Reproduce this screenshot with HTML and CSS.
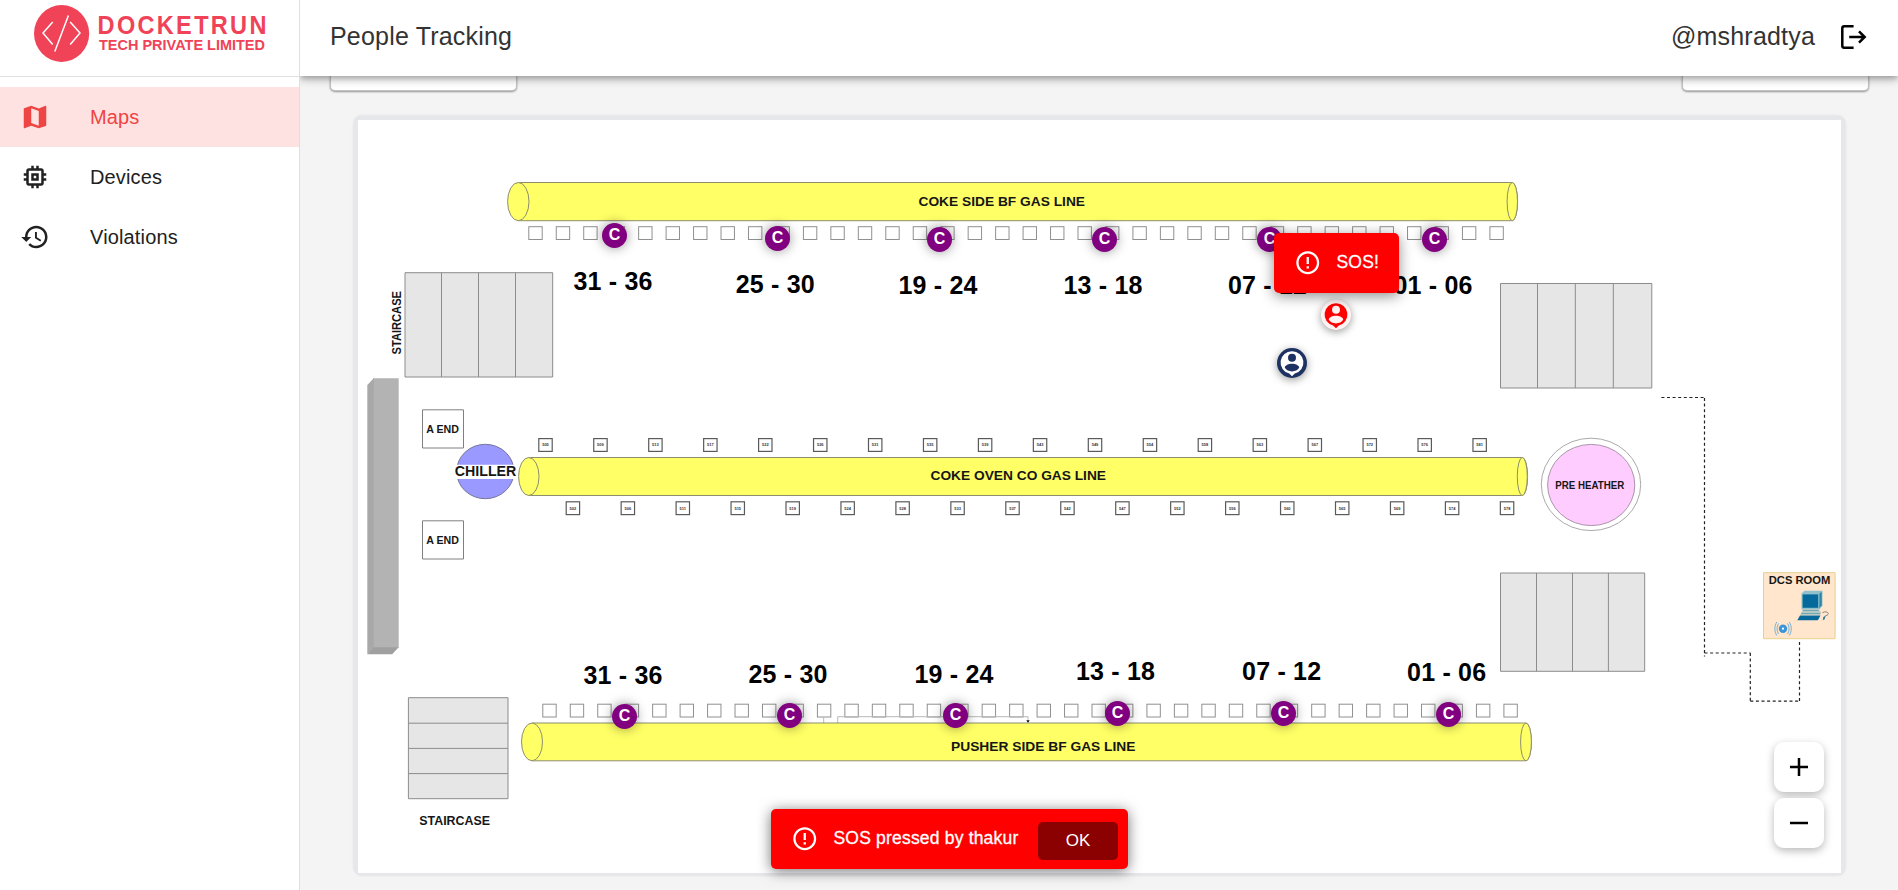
FILE: index.html
```html
<!DOCTYPE html>
<html lang="en">
<head>
<meta charset="utf-8">
<title>People Tracking</title>
<link rel="stylesheet" href="styles.css">
</head>
<body>
<div class="app">
  <aside class="sidebar">
    <div class="brand">
      <svg class="brand-logo" viewBox="0 0 299 76" role="img" aria-label="Docketrun Tech Private Limited">
        <ellipse class="brand-disc" cx="61.6" cy="33.5" rx="27.6" ry="28.4"/>
        <path class="brand-code" d="M52.7 21.9 43 33l9.7 11.6M70.2 21.9 80 33l-9.8 11.6M68.4 15.5 54.8 51.6"/>
        <text class="brand-name" transform="translate(97.6 33.5) scale(.92 1)" textLength="183.5">DOCKETRUN</text>
        <text class="brand-sub" x="99" y="50.3" textLength="166" lengthAdjust="spacingAndGlyphs">TECH PRIVATE LIMITED</text>
      </svg>
    </div>
    <nav class="nav">
      <a class="nav-item nav-item-active"><svg class="nav-icon" viewBox="0 0 24 24"><path d="M20.5 3l-.16.03L15 5.1 9 3 3.36 4.9c-.21.07-.36.25-.36.48V20.5c0 .28.22.5.5.5l.16-.03L9 18.9l6 2.1 5.64-1.9c.21-.07.36-.25.36-.48V3.5c0-.28-.22-.5-.5-.5zM15 19l-6-2.11V5l6 2.11V19z"/></svg>Maps</a>
      <a class="nav-item"><svg class="nav-icon" viewBox="0 0 24 24"><path d="M15 9H9v6h6V9zm-2 4h-2v-2h2v2zm8-2V9h-2V7c0-1.1-.9-2-2-2h-2V3h-2v2h-2V3H9v2H7c-1.1 0-2 .9-2 2v2H3v2h2v2H3v2h2v2c0 1.1.9 2 2 2h2v2h2v-2h2v2h2v-2h2c1.1 0 2-.9 2-2v-2h2v-2h-2v-2h2zm-4 6H7V7h10v10z"/></svg>Devices</a>
      <a class="nav-item"><svg class="nav-icon" viewBox="0 0 24 24"><path d="M13 3c-4.97 0-9 4.03-9 9H1l3.89 3.89.07.14L9 12H6c0-3.87 3.13-7 7-7s7 3.13 7 7-3.13 7-7 7c-1.93 0-3.68-.79-4.94-2.06l-1.42 1.42C8.27 19.99 10.51 21 13 21c4.97 0 9-4.03 9-9s-4.03-9-9-9zm-1 5v5l4.28 2.54.72-1.21-3.5-2.08V8H12z"/></svg>Violations</a>
    </nav>
  </aside>

  <div class="main">
    <header class="topbar">
      <h1 class="title">People Tracking</h1>
      <div class="account">
        <span>@mshradtya</span>
        <svg class="logout" viewBox="0 0 26 24"><path d="M12.6 1.3H3.3q-2 0-2 2v17.4q0 2 2 2h9.3M8.2 12h15.4M18 6.3l5.7 5.7-5.7 5.7"/></svg>
      </div>
    </header>
    <div class="content">
      <div class="controls"><div class="control"></div><div class="control control-right"></div></div>
      <section class="map">
        <svg class="plan" viewBox="358 120 1483 753">
          <g class="wall">
            <path fill="#b3b3b3" d="M373 378.3h25.7V648H373z"/>
            <path fill="#a8a8a8" d="M367.3 385l6.5-6.7V648l-6.5 6.3z"/>
            <path fill="#a0a0a0" d="M367.3 654.3l6.5-7h24.9l-6.5 7z"/>
          </g>
          <g class="stairs">
            <path d="M405 272.7h147.7V377H405zM441.5 272.7V377M478.5 272.7V377M515.5 272.7V377"/>
            <path d="M1500.5 283.5h151.3V388h-151.3zM1537.5 283.5V388M1575.3 283.5V388M1613.3 283.5V388"/>
            <path d="M1500.5 573h144.2v98.3h-144.2zM1536.5 573v98.3M1572.5 573v98.3M1608.4 573v98.3"/>
            <path d="M408.4 697.7H508V798.7H408.4zM408.4 723.2H508M408.4 748.4H508M408.4 773.6H508"/>
          </g>
          <g id="sockets"></g>
          <path class="trace" d="M823.7 717v6M837.7 723v-6.3H1028v3"/>
          <path d="M1026.4 720.2h3.2l-1.6 2.8z"/>
          <g class="pipe">
            <path d="M518.3 182.5H1512.3a5.3 19.1 0 0 1 0 38.2H518.3z"/>
            <ellipse cx="518.3" cy="201.6" rx="10.7" ry="19.1"/><ellipse cx="1512.3" cy="201.6" rx="5.2" ry="19.1"/>
            <path d="M528.7 457.5H1522.4a5.2 19 0 0 1 0 38H528.7z"/>
            <ellipse cx="528.8" cy="476.5" rx="10.2" ry="19"/><ellipse cx="1522.3" cy="476.5" rx="5" ry="19"/>
            <path d="M532 723H1526a5.4 18.9 0 0 1 0 37.8H532z"/>
            <ellipse cx="532" cy="741.9" rx="10.5" ry="18.9"/><ellipse cx="1526" cy="741.9" rx="5.4" ry="18.9"/>
          </g>
          <g class="room"><path d="M422.5 409.8h41V448h-41zM422.5 520.8h41V559h-41z"/></g>
          <ellipse class="chiller" cx="485.3" cy="471.5" rx="28.7" ry="27.2"/>
          <path fill="#fff" d="M455 464.7h61v14.3h-61z"/>
          <ellipse class="ring" cx="1591" cy="484.4" rx="49.7" ry="46.2"/>
          <ellipse class="heater" cx="1591.2" cy="485" rx="43.6" ry="40.6"/>
          <path class="cable" d="M1661.4 397.5h43M1704.5 398v258.5M1704.5 653h46M1750.3 653v48M1750.3 701.2h49.2M1799.5 701v-60"/>
          <g>
            <path class="dcs" d="M1763.5 572.7h71.600v66h-71.600z"/>
            <path fill="#8fc0cc" d="M1801.5 593.5l3-2.8h18v14.8l-3 4h-18z"/>
            <path fill="#06699c" d="M1802.6 594.4h15.6v13.4h-15.6z"/>
            <path fill="#2f84a5" d="M1819.4 593.8l2.3-2v13.4l-2.3 3z"/>
            <path fill="#6fa9b8" d="M1803 609.8h15l2.600 1.800h-18.500zM1801.500 612.400h19.500l-1 2.200h-19.500z"/>
            <path fill="#06699c" d="M1800 615.400h20.500l-2.600 4.800h-20.600z"/>
            <path class="mouse-cord" d="M1822.5 612.6c4-2.2 7.500.8 4.800 2.500l-2.800 1.300"/>
            <path fill="#2f7a95" d="M1823.3 617l2.200-.9-.8 3.200-1.900 1z"/>
            <circle fill="#3d95d8" cx="1783" cy="628.7" r="4.200"/><circle fill="#fff" cx="1783" cy="628.7" r="1.100"/>
            <path class="waves" d="M1778.600 623.500c-2 3-2 7.500 0 10.500M1776.800 622c-2.600 4-2.600 9.500 0 13.500M1787.500 623.500c2 3 2 7.500 0 10.500M1789.300 622c2.600 4 2.600 9.500 0 13.500"/>
          </g>
          <g class="label">
            <text x="918.500" y="206.300" font-size="12.700" textLength="166.500" lengthAdjust="spacingAndGlyphs">COKE SIDE BF GAS LINE</text>
            <text x="930.500" y="479.800" font-size="13.200" textLength="175.500" lengthAdjust="spacingAndGlyphs">COKE OVEN CO GAS LINE</text>
            <text x="951" y="751.300" font-size="13.300" textLength="184.500" lengthAdjust="spacingAndGlyphs">PUSHER SIDE BF GAS LINE</text>
            <text x="426.200" y="432.500" font-size="10.500" textLength="32.700" lengthAdjust="spacingAndGlyphs">A END</text>
            <text x="426.200" y="543.500" font-size="10.500" textLength="32.700" lengthAdjust="spacingAndGlyphs">A END</text>
            <text x="454.800" y="476.300" font-size="14" textLength="61.500" lengthAdjust="spacingAndGlyphs">CHILLER</text>
            <text x="1555.300" y="488.500" font-size="10" textLength="69" lengthAdjust="spacingAndGlyphs">PRE HEATHER</text>
            <text x="1768.800" y="584.300" font-size="10.200" textLength="61.500" lengthAdjust="spacingAndGlyphs">DCS ROOM</text>
            <text x="419.300" y="825.200" font-size="12" textLength="70.700" lengthAdjust="spacingAndGlyphs">STAIRCASE</text>
            <text transform="translate(401 354.500) rotate(-90)" font-size="12.300" textLength="63.500" lengthAdjust="spacingAndGlyphs">STAIRCASE</text>
          </g>
          <g id="zones" class="zone"></g>
        </svg>

        <div id="pins"></div>
        <div class="person person-safe"><svg viewBox="0 0 30 30"><path class="p-bg" d="M15 3.300a11.200 11.200 0 0 1 2.800 22.100L15 28.200l-2.800-2.800A11.200 11.200 0 0 1 15 3.300z"/><circle class="p-fg" cx="15" cy="9.700" r="4"/><path class="p-fg" d="M7.800 19.800c0-2.500 4-4 7.200-4s7.200 1.500 7.200 4c-1.500 2.300-4 3.600-7.200 3.600s-5.700-1.300-7.200-3.600z"/></svg></div>
        <div class="person person-sos"><svg viewBox="0 0 30 30"><path class="p-bg" d="M15 3.300a11.200 11.200 0 0 1 2.800 22.100L15 28.200l-2.800-2.800A11.200 11.200 0 0 1 15 3.300z"/><circle class="p-fg" cx="15" cy="9.700" r="4"/><path class="p-fg" d="M7.800 19.800c0-2.500 4-4 7.200-4s7.200 1.500 7.200 4c-1.500 2.300-4 3.600-7.200 3.600s-5.700-1.300-7.200-3.600z"/></svg></div>
        <div class="alert alert-pin"><svg class="alert-icon" viewBox="0 0 24 24"><path d="M11 15h2v2h-2zm0-8h2v6h-2zm.99-5C6.470 2 2 6.480 2 12s4.470 10 9.990 10C17.520 22 22 17.520 22 12S17.520 2 11.990 2zM12 20c-4.420 0-8-3.580-8-8s3.580-8 8-8 8 3.580 8 8-3.580 8-8 8z"/></svg><span>SOS!</span></div>
        <div class="zoom">
          <button class="zoom-btn" aria-label="Zoom in"><svg viewBox="0 0 18 18"><path d="M0 9h18M9 0v18"/></svg></button>
          <button class="zoom-btn" aria-label="Zoom out"><svg viewBox="0 0 18 18"><path d="M0 9h18"/></svg></button>
        </div>
      </section>
    </div>
  </div>
  <div class="alert snackbar"><svg class="alert-icon" viewBox="0 0 24 24"><path d="M11 15h2v2h-2zm0-8h2v6h-2zm.99-5C6.470 2 2 6.480 2 12s4.470 10 9.990 10C17.520 22 22 17.520 22 12S17.520 2 11.990 2zM12 20c-4.420 0-8-3.580-8-8s3.580-8 8-8 8 3.580 8 8-3.580 8-8 8z"/></svg><span>SOS pressed by thakur</span><button class="ok">OK</button></div>
</div>
<script src="map.js"></script>
</body>
</html>
```

FILE: styles.css
```css
* { box-sizing: border-box; }
body { margin: 0; background: #f4f4f4; font-family: "Liberation Sans", Arial, sans-serif; color: rgba(0, 0, 0, 0.87); overflow: hidden; }
button { font: inherit; border: 0; padding: 0; }

.app { display: flex; height: 890px; }

.sidebar { position: relative; z-index: 3; width: 300px; flex: none; background: #fff; border-right: 1px solid #dfdfdf; }
.brand { height: 77px; border-bottom: 1px solid #dfdfdf; }
.brand-logo { display: block; width: 299px; height: 76px; }
.brand-disc { fill: #f04358; }
.brand-code { fill: none; stroke: #fff; stroke-width: 1.5; }
.brand-name, .brand-sub { fill: #f04358; font-weight: 700; }
.brand-name { font-size: 25.6px; }
.brand-sub { font-size: 14.6px; }
.nav { padding-top: 10px; }
.nav-item { display: flex; align-items: center; gap: 40px; height: 60px; padding-left: 20px; font-size: 20px; letter-spacing: .15px; color: #212121; }
.nav-icon { width: 30px; height: 30px; fill: currentColor; }
.nav-item-active { background: #fee2e2; color: #ef4444; }

.main { flex: 1; display: flex; flex-direction: column; min-width: 0; }
.topbar { position: relative; z-index: 2; flex: none; height: 76px; padding: 0 30px 3px; background: #fff; display: flex; align-items: center; justify-content: space-between; box-shadow: 0 2.5px 5px -1px rgba(0,0,0,.2), 0 5px 6.25px rgba(0,0,0,.14), 0 1.25px 12.5px rgba(0,0,0,.12); }
.title { margin: 0; font-size: 25px; font-weight: 400; letter-spacing: .19px; color: #333; }
.account { display: flex; align-items: center; gap: 26px; font-size: 25px; letter-spacing: .19px; color: #333; }
.logout { width: 26px; height: 24px; margin-right: 1px; fill: none; stroke: #000; stroke-width: 2.5; }

.content { flex: 1; min-height: 0; }
.controls { display: flex; justify-content: space-between; height: 15px; padding: 0 29px 0 30px; }
.control { width: 187px; height: 15px; background: #fff; border: 1px solid #c4c4c4; border-top: 0; border-radius: 0 0 5px 5px; box-shadow: 0 1px 2px rgba(0,0,0,.4); }

.map { position: relative; width: 1491px; height: 759px; margin: 25px 0 0 54px; background: #fff; border: solid #e5e7eb; border-width: 4px 4px 2px; border-radius: 8px; box-shadow: 0 0 3px rgba(0,0,0,.14); }
.plan { display: block; width: 1483px; height: 753px; background: #fff; }
.stairs path { fill: #e6e6e6; stroke: #8c8c8c; stroke-width: 1; }
.pipe { fill: #ffff66; stroke: #8d8d70; stroke-width: 1; }
.room path { fill: #fff; stroke: #808080; }
.socket { fill: none; stroke: #909090; }
.socket-tagged { stroke: #5a5a5a; stroke-width: 1.2; }
.socket-tag { font-size: 4px; font-weight: 700; text-anchor: middle; fill: #333; }
.trace { fill: none; stroke: #b8b8b8; }
.chiller { fill: #9999ff; stroke: #77779c; }
.ring { fill: #fff; stroke: #aaa; }
.heater { fill: #ffccff; stroke: #a995a9; }
.cable { fill: none; stroke: #222; stroke-width: 1.2; stroke-dasharray: 3 2.6; }
.dcs { fill: #ffe6cc; stroke: #e8d08c; }
.mouse-cord { fill: none; stroke: #777; stroke-width: .9; }
.waves { fill: none; stroke: #67a9d8; stroke-width: .9; }
.label { font-weight: 700; fill: #161616; }
.zone { font-size: 25px; font-weight: 700; text-anchor: middle; letter-spacing: .19px; fill: #000; }

.pin { position: absolute; width: 25px; height: 25px; border-radius: 50%; background: #800080; color: #fff; font-size: 16px; font-weight: 700; line-height: 24px; text-align: center; box-shadow: 0 0 12px rgba(0,0,0,.42); }
.person { position: absolute; width: 30px; height: 30px; border-radius: 50%; box-shadow: 0 2px 9px rgba(0,0,0,.4); }
.person svg { display: block; }
.person-safe { left: 919px; top: 228px; background: #1d3263; }
.person-safe .p-bg { fill: #fff; }
.person-safe .p-fg { fill: #1d3263; }
.person-sos { left: 963px; top: 180px; background: #fff2f2; }
.person-sos .p-bg { fill: #f00; }
.person-sos .p-fg { fill: #fff2f2; }

.alert { position: absolute; display: flex; align-items: center; height: 60px; padding-left: 20px; background: #f00; color: #fff; border-radius: 5px; font-size: 17.5px; letter-spacing: .19px; white-space: nowrap; }
.alert span { padding-bottom: 1px; -webkit-text-stroke: .3px #fff; }
.alert-icon { width: 27.5px; height: 27.5px; margin-right: 15px; fill: #fff; }
.alert-pin { left: 916px; top: 113px; width: 125px; box-shadow: 0 3px 14px rgba(0,0,0,.45); }
.snackbar { z-index: 4; left: 771px; top: 809px; width: 357px; box-shadow: 0 2px 14px rgba(0,0,0,.55); }
.ok { width: 80px; height: 38px; margin: 3px 10px 0 auto; border-radius: 5px; background: #8b0000; color: #fff; font-size: 17px; }

.zoom { position: absolute; left: 1416px; top: 622px; display: flex; flex-direction: column; gap: 6px; }
.zoom-btn { display: grid; place-items: center; width: 50px; height: 50px; background: #fff; border-radius: 10px; box-shadow: 0 3px 9px rgba(0,0,0,.28); }
.zoom-btn svg { width: 18px; height: 18px; stroke: #000; stroke-width: 2.5; }
```

FILE: map.js
```js
const SVG = "http://www.w3.org/2000/svg";
const make = (parent, tag, attrs, text) => {
  const el = document.createElementNS(SVG, tag);
  for (const k in attrs) el.setAttribute(k, attrs[k]);
  if (text) el.textContent = text;
  parent.appendChild(el);
};

// Burner sockets along each gas line
const sockets = document.getElementById("sockets");
const row = (x0, y, step, count, tags) => {
  for (let i = 0; i < count; i++) {
    const x = x0 + i * step;
    make(sockets, "rect", { x, y, width: 13.4, height: 12.8, class: tags ? "socket socket-tagged" : "socket" });
    if (tags) make(sockets, "text", { x: x + 6.7, y: y + 7.8, class: "socket-tag" }, String(tags[i]));
  }
};
row(528.8, 226.7, 27.46, 36);
row(542.8, 704.2, 27.46, 36);
row(538.8, 438.6, 54.95, 18, [505, 509, 513, 517, 522, 526, 531, 535, 539, 543, 549, 554, 558, 563, 567, 572, 576, 581]);
row(566.2, 501.8, 54.95, 18, [502, 506, 511, 515, 519, 524, 528, 533, 537, 542, 547, 552, 556, 560, 565, 569, 574, 578]);

// [range, pin x, pin y, label x, label baseline]
const zones = [
  ["31 - 36", 614.5, 235.5, 613, 290.3], ["25 - 30", 777.5, 238.5, 775.3, 293],
  ["19 - 24", 939.5, 239.5, 938, 294], ["13 - 18", 1104.5, 239.5, 1103, 294],
  ["07 - 12", 1269.5, 239.5, 1267.5, 294], ["01 - 06", 1434.5, 239.5, 1433, 294],
  ["31 - 36", 624.5, 716.5, 623, 683.8], ["25 - 30", 789.5, 715.5, 788, 683],
  ["19 - 24", 955.5, 715.5, 954, 683], ["13 - 18", 1117.5, 713.5, 1115.5, 680.3],
  ["07 - 12", 1283.5, 713.5, 1281.7, 680.3], ["01 - 06", 1448.5, 714.5, 1446.7, 681]
];
const labels = document.getElementById("zones");
const pins = document.getElementById("pins");
for (const [range, px, py, lx, ly] of zones) {
  make(labels, "text", { x: lx, y: ly }, range);
  const pin = document.createElement("div");
  pin.className = "pin";
  pin.textContent = "C";
  pin.style.left = px - 12.5 - 358 + "px";
  pin.style.top = py - 12.5 - 120 + "px";
  pins.appendChild(pin);
}
```
